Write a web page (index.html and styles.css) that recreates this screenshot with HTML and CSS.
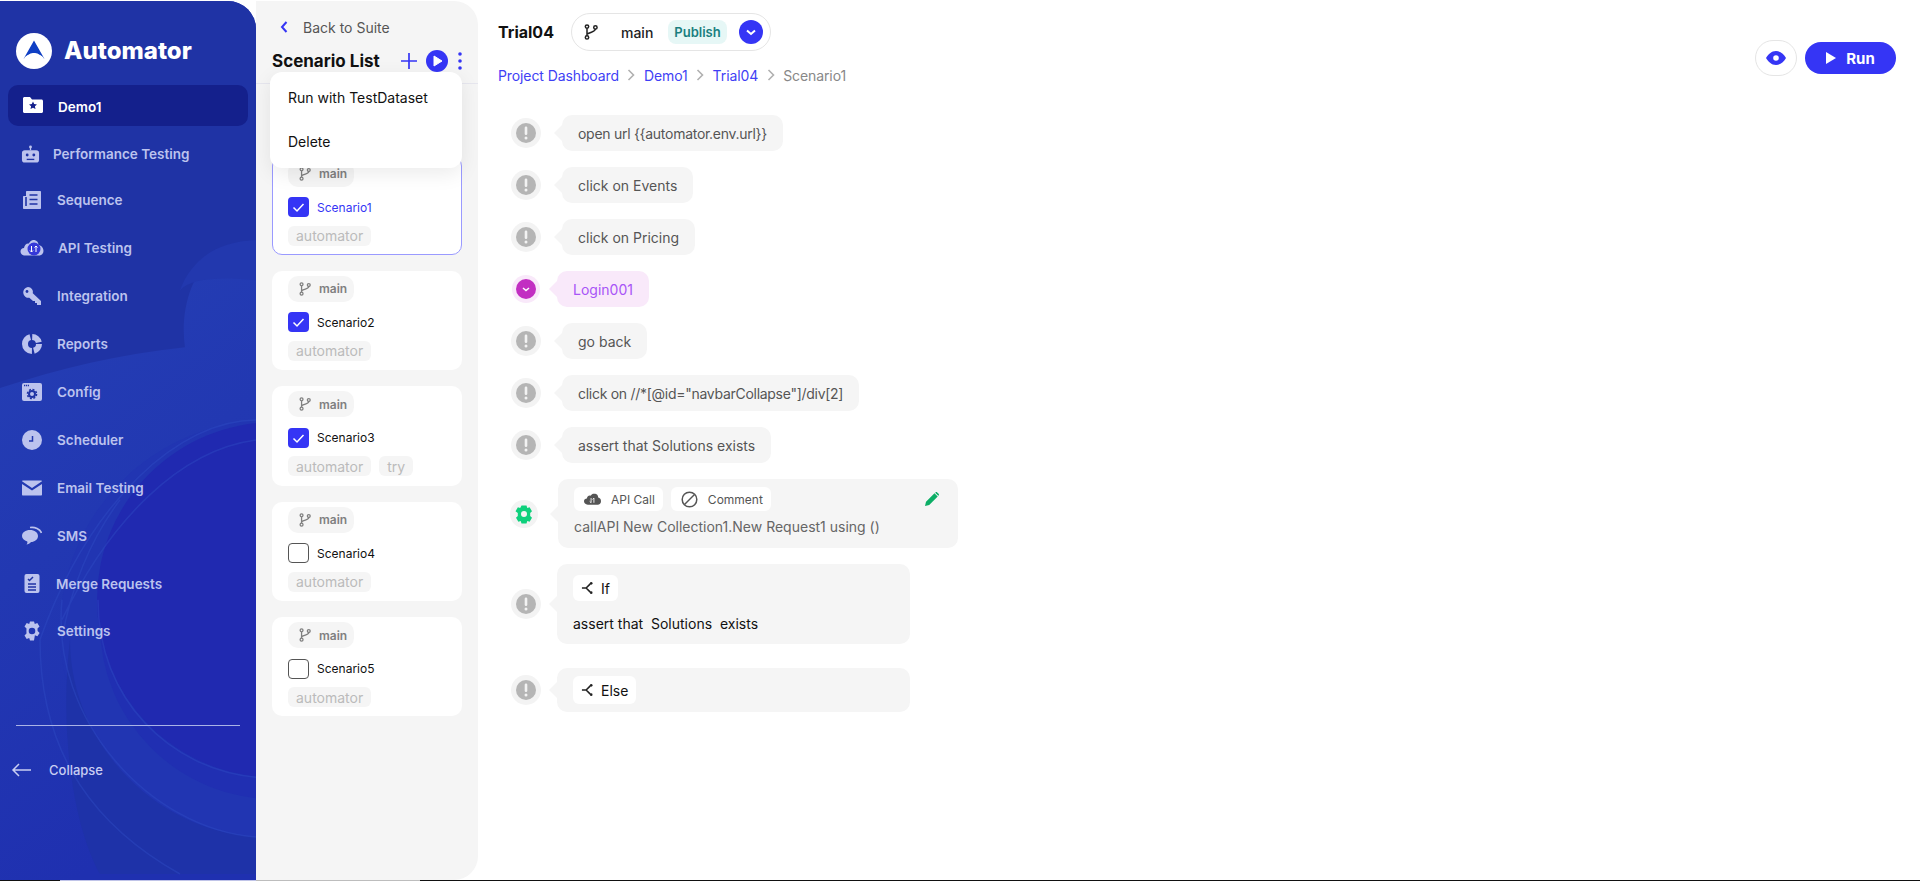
FILE: index.html
```html
<!DOCTYPE html>
<html lang="en">
<head>
<meta charset="utf-8">
<title>Automator</title>
<link rel="stylesheet" href="styles.css">
</head>
<body>
<svg class="defs" width="0" height="0" aria-hidden="true">
  <symbol id="branch" viewBox="0 0 14 16">
    <circle cx="3" cy="2.600" r="1.700" fill="none" stroke="currentColor" stroke-width="1.500"/>
    <circle cx="3" cy="13.400" r="1.700" fill="none" stroke="currentColor" stroke-width="1.500"/>
    <circle cx="11.400" cy="3.400" r="1.700" fill="none" stroke="currentColor" stroke-width="1.500"/>
    <path d="M3 4.300v7.400M11.400 5.100c0 3-5 2.600-8.400 5" fill="none" stroke="currentColor" stroke-width="1.500"/>
  </symbol>
  <symbol id="tick" viewBox="0 0 21 20">
    <path d="M5.500 10.500l3.500 3.500 6.500-7" fill="none" stroke="#fff" stroke-width="1.500"/>
  </symbol>
  <symbol id="warn" viewBox="0 0 30 30">
    <circle cx="15" cy="15" r="15" fill="#f3f3f3"/>
    <circle cx="15" cy="15" r="10" fill="#b5b5b5"/>
    <rect x="13.700" y="8.500" width="2.600" height="8.500" rx="1.200" fill="#f3f3f3"/>
    <circle cx="15" cy="20" r="1.500" fill="#f3f3f3"/>
  </symbol>
  <symbol id="fork" viewBox="0 0 14 14">
    <path d="M1 7h4.500L10 2.500M5.500 7l4.500 4.500" fill="none" stroke="#222" stroke-width="1.700"/>
    <circle cx="11" cy="2" r="1.400" fill="#222"/>
    <circle cx="11" cy="12" r="1.400" fill="#222"/>
  </symbol>
</svg>

<div class="app">
  <aside class="sidebar">
    <svg class="waves" viewBox="0 0 256 881" preserveAspectRatio="none" aria-hidden="true">
      <defs>
        <linearGradient id="band" x1="0" y1="0" x2="0.300" y2="1">
          <stop offset="0" stop-color="#2540b4"/>
          <stop offset="1" stop-color="#1f30b0"/>
        </linearGradient>
      </defs>
      <path d="M0 388C60 368 120 354 185 347C178 300 200 240 256 240V881H0Z" fill="url(#band)"/>
      <path d="M180 290C190 278 220 276 256 280V240C215 240 190 262 180 290Z" fill="#2238ae"/>
      <circle cx="270" cy="630" r="210" fill="#2135b2"/>
      <circle cx="275" cy="625" r="175" fill="#202fb2"/>
      <circle cx="275" cy="600" r="178" fill="#2029b0"/>
      <path d="M70 640C70 740 150 830 256 838V875H100C70 820 60 720 70 640Z" fill="#1e32a8"/>
      <path d="M98 600C98 700 170 770 256 778M62 600C50 720 150 830 256 838M40 640C40 760 100 830 180 875M120 500C90 540 70 590 62 640M256 440C180 450 110 520 62 620M256 420C180 420 90 500 40 640" fill="none" stroke="#2f4cc4" stroke-width="1.500" opacity=".45"/>
    </svg>
    <div class="brand">
      <svg class="logo" viewBox="0 0 36 36">
        <circle cx="18" cy="18" r="18" fill="#fff"/>
        <path d="M18 7.500L28.500 26C24 21 21 20 18 20S12 21 7.500 26Z" fill="#0f3fc4"/>
        <path d="M9 25c4-4.500 14-4.500 18 0" fill="none" stroke="#fff" stroke-width="1.200"/>
      </svg>
      <span class="brand-name">Automator</span>
    </div>
    <nav class="nav">
      <a class="nav-item active">
        <svg class="nav-icon" viewBox="0 0 20 16"><path d="M0 1.500C0 .7.700 0 1.500 0H7l2 2.500h9.500c.8 0 1.500.7 1.500 1.500v10.500c0 .8-.7 1.500-1.500 1.500h-17C.7 16 0 15.300 0 14.500Z" fill="#fff"/><path d="M10 4.500l1.200 2.600 2.800.3-2.100 1.900.6 2.800L10 10.700l-2.500 1.400.6-2.800L6 7.400l2.800-.3Z" fill="#14208c"/></svg>
        <span>Demo1</span>
      </a>
      <a class="nav-item i-perf">
        <svg class="nav-icon" viewBox="0 0 20 20"><circle cx="10" cy="2.500" r="1.500"/><rect x="9.300" y="3" width="1.400" height="3"/><rect x="1" y="6" width="18" height="13" rx="3"/><circle cx="6.500" cy="11" r="1.500" fill="#1f33a5"/><circle cx="13.500" cy="11" r="1.500" fill="#1f33a5"/><rect x="6" y="15" width="8" height="1.400" fill="#1f33a5"/></svg>
        <span>Performance Testing</span>
      </a>
      <a class="nav-item i-seq">
        <svg class="nav-icon" viewBox="0 0 20 20"><path d="M5 1h13c.6 0 1 .4 1 1v16c0 .6-.4 1-1 1H2c-.6 0-1-.4-1-1V7c0-.6.4-1 1-1h2V2c0-.6.4-1 1-1Z"/><path d="M7.500 5h8M7.500 9.500h8M7.500 14h8M4 7v9" stroke="#1f33a5" stroke-width="1.600" fill="none"/></svg>
        <span>Sequence</span>
      </a>
      <a class="nav-item i-api">
        <svg class="nav-icon wide" viewBox="0 0 24 20"><path d="M5 17.500C2 17.500.5 15.500.5 13.500S2 10 4 10c.5-3 2.500-5 5-4.500C10 3 12 1.500 14.500 2c2.500.5 4 2.500 4 5 3 .5 5 3 5 6 0 2.500-2 4.500-4.500 4.500Z"/><circle cx="14" cy="11" r="6.500" fill="#3538d8"/><path d="M11.500 8v6M11.500 14l-1.500-1.500M11.500 14l1.500-1.500M16 14V8M16 8l-1.500 1.500M16 8l1.500 1.500" stroke="#fff" stroke-width="1" fill="none"/></svg>
        <span>API Testing</span>
      </a>
      <a class="nav-item">
        <svg class="nav-icon" viewBox="0 0 20 20"><path d="M6 1a5 5 0 0 1 4.800 6.300L19 15v4h-4v-2h-2v-2h-2l-3.700-3.200A5 5 0 1 1 6 1Z"/><circle cx="5" cy="5.500" r="1.400" fill="#1f33a5"/></svg>
        <span>Integration</span>
      </a>
      <a class="nav-item">
        <svg class="nav-icon" viewBox="0 0 20 20"><circle class="donut" cx="10" cy="10" r="7" stroke-dasharray="9 2 20 2 9 2"/></svg>
        <span>Reports</span>
      </a>
      <a class="nav-item">
        <svg class="nav-icon" viewBox="0 0 20 20"><rect y="1" width="20" height="18" rx="2"/><path d="M2 3.500h5" stroke="#1f33a5" stroke-width="1.400" stroke-dasharray="1.200 .7" fill="none"/><circle cx="10" cy="12" r="3" fill="none" stroke="#1f33a5" stroke-width="2"/><circle cx="10" cy="12" r="4.600" fill="none" stroke="#1f33a5" stroke-width="1.400" stroke-dasharray="2 1.600"/></svg>
        <span>Config</span>
      </a>
      <a class="nav-item">
        <svg class="nav-icon" viewBox="0 0 20 20"><circle cx="10" cy="10" r="10"/><path d="M10.500 6v5H7" fill="none" stroke="#2238ae" stroke-width="1.500"/></svg>
        <span>Scheduler</span>
      </a>
      <a class="nav-item">
        <svg class="nav-icon" viewBox="0 0 20 20"><path d="M1 2.500h18c.5 0 1 .3 1 .8L10 10 0 3.300c0-.5.500-.8 1-.8ZM0 6l10 6.500L20 6v10.500c0 .6-.4 1-1 1H1c-.6 0-1-.4-1-1Z"/></svg>
        <span>Email Testing</span>
      </a>
      <a class="nav-item">
        <svg class="nav-icon" viewBox="0 0 20 20"><path d="M8 4c4.500 0 8 2.500 8 6s-3.500 6-7 6c-1 1.500-3 2.500-4.500 2.500 1-1 1-2 .8-3C2 14.500 0 12.500 0 10c0-3.500 3.500-6 8-6Z"/><path d="M8 1.500c5-.8 10 1.500 11.500 5.500" fill="none" stroke="#bcc3ee" stroke-width="1.600"/></svg>
        <span>SMS</span>
      </a>
      <a class="nav-item i-merge">
        <svg class="nav-icon" viewBox="0 0 20 20"><rect x="2.500" y="0" width="15" height="19" rx="2"/><path d="M6 5l1.500 1.500L11 3" fill="none" stroke="#1f33a5" stroke-width="1.500"/><path d="M6 10h8M6 13h8M6 16h8" stroke="#1f33a5" stroke-width="1.300"/></svg>
        <span>Merge Requests</span>
      </a>
      <a class="nav-item i-set">
        <svg class="nav-icon" viewBox="0 0 20 20"><path fill-rule="evenodd" d="M8 .5h4l.8 2.600 2.500-1 2.200 3.400-2 1.900.1 2.600 2 1.900-2.200 3.400-2.500-1L12 19.500H8l-.8-2.600-2.500 1-2.200-3.400 2-1.900L4.400 10l.1-2.600-2-1.900 2.200-3.400 2.500 1ZM10 6.700a3.300 3.300 0 1 0 0 6.600 3.300 3.300 0 0 0 0-6.600Z"/></svg>
        <span>Settings</span>
      </a>
    </nav>
    <div class="side-foot">
      <div class="collapse">
        <svg class="collapse-arrow" viewBox="0 0 20 14"><path d="M20 7H2M8 1L2 7l6 6" fill="none" stroke="#c9cef2" stroke-width="1.500"/></svg>
        <span>Collapse</span>
      </div>
    </div>
  </aside>

  <section class="list-panel">
    <div class="back">
      <svg class="back-icon" viewBox="0 0 8 12"><path d="M6.500 1L2 6l4.500 5" fill="none" stroke="#3535f5" stroke-width="2"/></svg>
      <span>Back to Suite</span>
    </div>
    <div class="list-head">
      <h2>Scenario List</h2>
      <div class="list-tools">
        <svg class="tool-plus" viewBox="0 0 16 16"><path d="M8 0v16M0 8h16" stroke="#3535f5" stroke-width="1.700"/></svg>
        <svg class="tool-play" viewBox="0 0 22 22"><circle cx="11" cy="11" r="11" fill="#3535f5"/><path d="M8 6l8 5-8 5Z" fill="#fff" stroke="#fff" stroke-linejoin="round"/></svg>
        <svg class="tool-dots" viewBox="0 0 4 18"><circle cx="2" cy="2" r="1.800" fill="#3535f5"/><circle cx="2" cy="9" r="1.800" fill="#3535f5"/><circle cx="2" cy="16" r="1.800" fill="#3535f5"/></svg>
      </div>
    </div>
    <div class="menu">
      <div class="menu-item">Run with TestDataset</div>
      <div class="menu-item">Delete</div>
    </div>
    <div class="cards">
      <article class="card selected">
        <div class="pill"><svg class="pill-icon"><use href="#branch"/></svg>main</div>
        <div class="check-row"><span class="check on"><svg><use href="#tick"/></svg></span><span>Scenario1</span></div>
        <div class="tags"><span class="tag">automator</span></div>
      </article>
      <article class="card">
        <div class="pill"><svg class="pill-icon"><use href="#branch"/></svg>main</div>
        <div class="check-row"><span class="check on"><svg><use href="#tick"/></svg></span><span>Scenario2</span></div>
        <div class="tags"><span class="tag">automator</span></div>
      </article>
      <article class="card">
        <div class="pill"><svg class="pill-icon"><use href="#branch"/></svg>main</div>
        <div class="check-row"><span class="check on"><svg><use href="#tick"/></svg></span><span>Scenario3</span></div>
        <div class="tags"><span class="tag">automator</span><span class="tag">try</span></div>
      </article>
      <article class="card">
        <div class="pill"><svg class="pill-icon"><use href="#branch"/></svg>main</div>
        <div class="check-row"><span class="check"></span><span>Scenario4</span></div>
        <div class="tags"><span class="tag">automator</span></div>
      </article>
      <article class="card">
        <div class="pill"><svg class="pill-icon"><use href="#branch"/></svg>main</div>
        <div class="check-row"><span class="check"></span><span>Scenario5</span></div>
        <div class="tags"><span class="tag">automator</span></div>
      </article>
    </div>
  </section>

  <main class="content">
    <header class="top">
      <div class="top-left">
        <div class="title-row">
          <h1>Trial04</h1>
          <div class="branch-box">
            <svg class="branch-icon"><use href="#branch"/></svg>
            <span class="branch-name">main</span>
            <span class="publish">Publish</span>
            <svg class="branch-go" viewBox="0 0 24 24"><circle cx="12" cy="12" r="12" fill="#3535f5"/><path d="M8 10.500l4 3.500 4-3.500" fill="none" stroke="#fff" stroke-width="2"/></svg>
          </div>
        </div>
        <div class="crumbs">
          <a>Project Dashboard</a>
          <svg class="crumb-sep" viewBox="0 0 8 12"><path d="M1.500 1l5 5-5 5" fill="none" stroke="#b0b0b0" stroke-width="1.600"/></svg>
          <a>Demo1</a>
          <svg class="crumb-sep" viewBox="0 0 8 12"><path d="M1.500 1l5 5-5 5" fill="none" stroke="#b0b0b0" stroke-width="1.600"/></svg>
          <a>Trial04</a>
          <svg class="crumb-sep" viewBox="0 0 8 12"><path d="M1.500 1l5 5-5 5" fill="none" stroke="#b0b0b0" stroke-width="1.600"/></svg>
          <span>Scenario1</span>
        </div>
      </div>
      <div class="top-right">
        <button class="eye-btn" type="button"><svg viewBox="0 0 20 14"><path fill-rule="evenodd" d="M10 0c4.500 0 8 3.500 10 7-2 3.500-5.500 7-10 7S2 10.500 0 7c2-3.500 5.500-7 10-7Zm0 4.200a2.800 2.800 0 1 0 0 5.600 2.800 2.800 0 0 0 0-5.600Z" fill="#3535f5"/></svg></button>
        <button class="run-btn" type="button"><svg viewBox="0 0 10 12"><path d="M0 0l10 6-10 6Z" fill="#fff"/></svg>Run</button>
      </div>
    </header>

    <div class="steps">
      <div class="step"><svg class="step-icon"><use href="#warn"/></svg><div class="bubble tight">open url {{automator.env.url}}</div></div>
      <div class="step"><svg class="step-icon"><use href="#warn"/></svg><div class="bubble">click on Events</div></div>
      <div class="step"><svg class="step-icon"><use href="#warn"/></svg><div class="bubble">click on Pricing</div></div>
      <div class="step login">
        <svg class="step-icon" viewBox="0 0 30 30"><circle cx="15" cy="15" r="14" fill="#f9e9fa"/><circle cx="15" cy="15" r="10" fill="#c22fc2"/><path d="M12 14l3 2.600 3-2.600" fill="none" stroke="#fff" stroke-width="1.500"/></svg>
        <div class="bubble">Login001</div>
      </div>
      <div class="step"><svg class="step-icon"><use href="#warn"/></svg><div class="bubble">go back</div></div>
      <div class="step"><svg class="step-icon"><use href="#warn"/></svg><div class="bubble tight">click on //*[@id="navbarCollapse"]/div[2]</div></div>
      <div class="step"><svg class="step-icon"><use href="#warn"/></svg><div class="bubble">assert that Solutions exists</div></div>
      <div class="step api">
        <svg class="step-icon" viewBox="0 0 30 30"><circle cx="15" cy="15" r="14" fill="#f3f3f3"/><path fill-rule="evenodd" d="M12.500 6.500h5l.8 2.500 2.300-.7 2.400 4-1.800 1.700v3l1.800 1.700-2.400 4-2.300-.7-.8 2.500h-5l-.8-2.500-2.300.7-2.400-4 1.800-1.700v-3L6.500 12.300l2.400-4 2.300.7ZM15 12a3 3 0 1 0 0 6 3 3 0 0 0 0-6Z" fill="#0ed07c"/></svg>
        <div class="bubble card-bubble">
          <div class="api-tags">
            <span class="api-tag"><svg class="cloud" viewBox="0 0 18 12"><path d="M4 12C1.500 12 0 10.500 0 8.500S1.500 5.500 3 5.500C3.500 3 5 2 7 2.500 8 .5 10 0 12 .5s3 2 3 4c2 .3 3 2 3 3.800C18 10.500 16.500 12 14.500 12Z" fill="#555"/><path d="M7.500 5v5M7.500 10L6 8.500M10.500 10V5M10.500 5L9 6.500" stroke="#f3f3f3" fill="none"/></svg>API Call</span>
            <span class="api-tag"><svg class="ban" viewBox="0 0 17 17"><circle cx="8.500" cy="8.500" r="7.300" fill="none" stroke="#555" stroke-width="1.500"/><path d="M3.500 13.500l10-10" stroke="#555" stroke-width="1.500"/></svg>Comment</span>
            <svg class="pencil" viewBox="0 0 14 14"><path d="M0 14l1-4.200L9.500 1.300l3.200 3.200L4.200 13ZM10.500.4c.5-.5 1.200-.5 1.700 0l1.400 1.400c.5.500.5 1.200 0 1.700l-.3.300-3.100-3.100Z" fill="#0cae66"/></svg>
          </div>
          <div class="api-text">callAPI New Collection1.New Request1 using ()</div>
        </div>
      </div>
      <div class="step cond if">
        <svg class="step-icon"><use href="#warn"/></svg>
        <div class="bubble card-bubble">
          <span class="cond-tag"><svg class="fork"><use href="#fork"/></svg>If</span>
          <div class="cond-text">assert that&nbsp; Solutions&nbsp; exists</div>
        </div>
      </div>
      <div class="step cond else">
        <svg class="step-icon"><use href="#warn"/></svg>
        <div class="bubble card-bubble">
          <span class="cond-tag"><svg class="fork"><use href="#fork"/></svg>Else</span>
        </div>
      </div>
    </div>
  </main>
</div>
<div class="taskbar"><span class="taskbar-dark"></span><span class="taskbar-light"></span><span class="taskbar-gray"></span><span class="taskbar-end"></span></div>
</body>
</html>
```
FILE: styles.css
```css
* { box-sizing: border-box; }
html, body { margin: 0; height: 881px; overflow: hidden; background: #fff; }
body { font-family: Inter, "Liberation Sans", sans-serif; color: #111; }
.defs { position: absolute; }
h1, h2 { margin: 0; }

.app { display: flex; height: 880px; }

/* Sidebar */
.sidebar {
  position: relative;
  flex: 0 0 256px;
  height: 879px;
  margin-top: 1px;
  background: #1f30b4;
  border-radius: 0 28px 0 0;
  overflow: hidden;
  display: flex;
  flex-direction: column;
  color: #bcc3ee;
}
.waves { position: absolute; inset: 0; width: 100%; height: 100%; background: #1f33a5; }
.brand { position: relative; display: flex; align-items: center; gap: 12px; padding: 0 0 0 16px; height: 84px; }
.logo { width: 36px; height: 36px; flex: none; margin-top: 16px; }
.brand-name { font-size: 24px; font-weight: 800; color: #fff; margin-top: 15px; }
.nav { position: relative; display: flex; flex-direction: column; padding: 0 8px; }
.nav-item { display: flex; align-items: center; height: 48px; padding-left: 14px; font-size: 13.500px; font-weight: 600; gap: 15px; }
.nav-item.active { height: 41px; margin-bottom: 4px; padding-top: 2px; padding-left: 15px; background: #14208c; border-radius: 10px; color: #fff; gap: 15px; }
.active .nav-icon { height: 16px; margin-top: -4px; }
.nav-icon { width: 20px; height: 20px; flex: none; fill: #bcc3ee; }
.nav-icon.wide { width: 24px; }
.donut { fill: none; stroke: #bcc3ee; stroke-width: 6; }
.i-perf { gap: 13px; padding-left: 13px; }
.i-perf .nav-icon { width: 19px; }
.i-seq { height: 44px; }
.i-api { gap: 14px; padding-left: 12px; margin-top: 2px; }
.i-merge { gap: 14px; }
.i-set { height: 46px; }
.side-foot { position: relative; margin: 71px 16px 0; border-top: 1px solid #aab3e6; }
.collapse { display: flex; align-items: center; gap: 18px; margin: 36px 0 0 -5px; font-size: 13px; font-weight: 500; color: #c9cef2; }
.collapse-arrow { width: 20px; height: 14px; flex: none; }

/* Scenario list */
.list-panel {
  position: relative;
  flex: 0 0 222px;
  height: 879px;
  margin-top: 1px;
  background: #f5f5f5;
  border-radius: 0 24px 24px 0;
  padding: 0 16px;
}
.back { display: flex; align-items: center; height: 46px; padding: 6px 0 0 8px; gap: 15px; font-size: 14px; color: #555; }
.back-icon { width: 8px; height: 12px; flex: none; }
.list-head { display: flex; align-items: center; justify-content: space-between; height: 27px; margin-bottom: 81.500px; position: relative; }
.list-head::after { content: ""; position: absolute; left: -16px; right: -16px; top: 36px; height: 1px; background: #e6e6ee; }
.list-head h2 { font-size: 17px; font-weight: 700; color: #111; white-space: nowrap; }
.list-tools { display: flex; align-items: center; gap: 9px; }
.tool-plus { width: 16px; height: 16px; }
.tool-play { width: 22px; height: 22px; }
.tool-dots { width: 4px; height: 18px; margin-left: 1px; }
.menu {
  position: absolute; z-index: 2; left: 14px; top: 71px; width: 192px; height: 96px;
  background: #fff; border-radius: 12px; box-shadow: 0 6px 20px rgba(0,0,0,.08);
  padding-top: 3px;
}
.menu-item { height: 44px; display: flex; align-items: center; padding-left: 18px; font-size: 14px; font-weight: 400; color: #111; }
.cards { display: flex; flex-direction: column; gap: 16px; }
.card { width: 190px; height: 99.400px; background: #fff; border-radius: 10px; padding: 5px 16px 0; flex: none; }
.card.selected { border: 1px solid #9a9aff; padding: 4px 15px 0; color: #3535f5; }
.pill { display: inline-flex; align-items: center; height: 26px; padding: 0 8px 0 11px; gap: 8px; background: #f5f5f5; border-radius: 10px; font-size: 12px; font-weight: 600; color: #808080; width: 66px; }
.pill-icon { width: 12px; height: 14px; flex: none; }
.check-row { display: flex; align-items: center; gap: 8px; margin-top: 10px; height: 21px; font-size: 12px; color: #111; }
.selected .check-row { color: #3535f5; }
.check { width: 21px; height: 20px; border: 1px solid #555; border-radius: 4px; flex: none; }
.check.on { background: #3535f5; border: 0; }
.check svg { display: block; width: 21px; height: 20px; }
.tags { display: flex; gap: 8px; margin-top: 8px; }
.tag { display: flex; align-items: center; height: 20px; padding: 0 8px; border-radius: 6px; background: #f5f5f5; font-size: 14px; color: #bbb; }

/* Content */
.content { flex: 1; min-width: 0; display: flex; flex-direction: column; padding: 13px 24px 0 20px; }
.top { display: flex; justify-content: space-between; align-items: flex-start; height: 102px; }
.title-row { display: flex; align-items: center; gap: 16px; }
.title-row h1 { font-size: 16px; font-weight: 700; color: #111; }
.branch-box { display: flex; align-items: center; flex: none; width: 200px; height: 38px; border: 1px solid #e5e5e5; border-radius: 19px; padding-left: 12px; margin-left: 1px; }
.branch-icon { width: 14px; height: 16px; color: #222; flex: none; }
.branch-name { font-size: 14px; font-weight: 500; margin-left: 23px; color: #222; width: 47px; }
.publish { display: flex; align-items: center; justify-content: center; width: 59px; height: 24px; border-radius: 8px; background: #e6f7f6; color: #1a7f80; font-size: 13px; font-weight: 600; }
.branch-go { width: 24px; height: 24px; margin-left: 12px; flex: none; }
.crumbs { display: flex; align-items: center; margin-top: 14px; font-size: 14px; letter-spacing: -.1px; color: #888; height: 20px; }
.crumbs a { color: #3f3ff5; }
.crumb-sep { width: 8px; height: 12px; margin: 0 8.500px; flex: none; }
.top-right { display: flex; align-items: center; gap: 8px; margin-top: 27px; }
.eye-btn { width: 42px; height: 36px; border: 1px solid #e5e5e5; border-radius: 18px; background: #fff; padding: 0; display: flex; align-items: center; justify-content: center; }
.eye-btn svg { width: 20px; height: 14px; }
.run-btn { display: flex; align-items: center; justify-content: center; gap: 10px; width: 91px; height: 32px; border: 0; border-radius: 16px; background: #3535f5; color: #fff; font: 700 15px Inter, "Liberation Sans", sans-serif; }
.run-btn svg { width: 10px; height: 12px; }

.steps { display: flex; flex-direction: column; gap: 16px; }
.step { display: flex; align-items: center; padding-left: 13px; }
.step-icon { width: 30px; height: 30px; flex: none; }
.bubble { position: relative; margin-left: 21px; padding: 0 16px; height: 36px; display: flex; align-items: center; background: #f5f5f5; border-radius: 10px; font-size: 14px; color: #555; white-space: nowrap; }
.bubble.tight { letter-spacing: -.28px; }
.bubble::before { content: ""; position: absolute; left: -8px; top: 50%; margin-top: -8px; border: 8px solid transparent; border-left: 0; border-right-color: #f5f5f5; }
.login .bubble { margin-left: 16px; background: #f9e9fa; color: #a855f7; }
.login .bubble::before { border-right-color: #f9e9fa; }
.card-bubble { display: block; height: auto; white-space: normal; }
.api .step-icon { margin-left: -2px; }
.api .card-bubble { width: 400px; height: 69px; margin-left: 19px; padding: 8px 16px 0; }
.api-tags { display: flex; align-items: center; gap: 8px; }
.api-tag { display: flex; align-items: center; gap: 10px; height: 24px; padding: 0 8px 0 10px; background: #fff; border-radius: 6px; font-size: 12px; color: #555; }
.cloud { width: 17px; height: 12px; }
.ban { width: 17px; height: 17px; }
.pencil { width: 14px; height: 14px; margin-left: auto; margin-right: 3px; }
.api-text { font-size: 14px; color: #666; margin-top: 7px; }
.cond .card-bubble { width: 353px; margin-left: 16px; padding: 11px 16px 0; }
.cond.if .card-bubble { height: 80px; }
.cond.else { margin-top: 8px; }
.cond.else .card-bubble { height: 44px; padding-top: 8px; }
.cond-tag { display: inline-flex; align-items: center; gap: 7px; height: 26px; padding: 0 8px; background: #fff; border-radius: 6px; font-size: 14px; color: #111; }
.else .cond-tag { height: 28px; }
.fork { width: 13px; height: 14px; }
.cond-text { font-size: 14px; color: #111; margin-top: 14px; }

.taskbar { display: flex; height: 1px; }
.taskbar-dark { flex: 0 0 60px; background: #111; }
.taskbar-light { flex: 0 0 196px; background: #c0c4e8; }
.taskbar-gray { flex: 0 0 164px; background: #bdbdbd; }
.taskbar-end { flex: 1; background: #111; }
```
